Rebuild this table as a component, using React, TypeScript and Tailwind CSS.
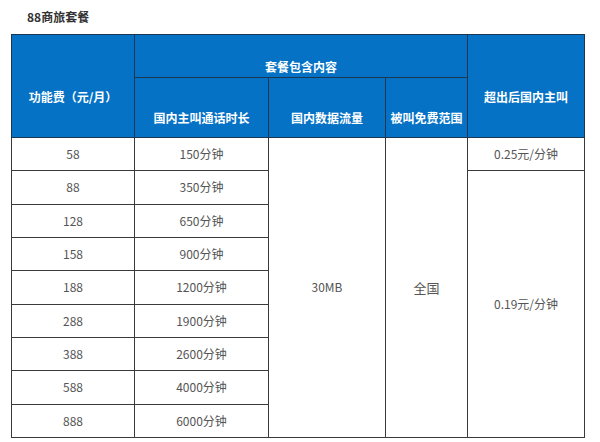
const rows = [
  { fee: '58', mins: '150分钟' },
  { fee: '88', mins: '350分钟' },
  { fee: '128', mins: '650分钟' },
  { fee: '158', mins: '900分钟' },
  { fee: '188', mins: '1200分钟' },
  { fee: '288', mins: '1900分钟' },
  { fee: '388', mins: '2600分钟' },
  { fee: '588', mins: '4000分钟' },
  { fee: '888', mins: '6000分钟' },
];

const th = 'border border-[#1d3650] bg-[#0572c6] text-white font-bold text-[12px] text-center align-top p-0';
const td = 'border border-[#3a3a3a] text-[#555] text-[12px] text-center align-middle p-0';

export default function App() {
  return (
    <div
      className="w-[600px] h-[442px] bg-white overflow-hidden"
      style={{ fontFamily: '"Noto Sans CJK SC", "Liberation Sans", sans-serif' }}
    >
      <div className="h-[34px] pl-[27px] pt-[9px] text-[12px] font-bold text-[#333] leading-[16px]">
        88商旅套餐
      </div>
      <table className="ml-[11px] w-[573px] table-fixed border-collapse">
        <colgroup>
          <col className="w-[123px]" />
          <col className="w-[134px]" />
          <col className="w-[117px]" />
          <col className="w-[82px]" />
          <col className="w-[117px]" />
        </colgroup>
        <thead>
          <tr className="h-[43px]">
            <th rowSpan={2} className={th}>
              <div className="pt-[54px] leading-[16px]">功能费（元/月）</div>
            </th>
            <th colSpan={3} className={th}>
              <div className="pt-[24px] leading-[16px]">套餐包含内容</div>
            </th>
            <th rowSpan={2} className={th}>
              <div className="pt-[54px] leading-[16px]">超出后国内主叫</div>
            </th>
          </tr>
          <tr className="h-[60px]">
            <th className={th}>
              <div className="pt-[32px] leading-[16px]">国内主叫通话时长</div>
            </th>
            <th className={th}>
              <div className="pt-[32px] leading-[16px]">国内数据流量</div>
            </th>
            <th className={th}>
              <div className="pt-[32px] leading-[16px]">被叫免费范围</div>
            </th>
          </tr>
        </thead>
        <tbody>
          {rows.map((r, i) => (
            <tr key={r.fee} className="h-[33.33px]">
              <td className={td}>{r.fee}</td>
              <td className={td}>{r.mins}</td>
              {i === 0 && (
                <>
                  <td rowSpan={9} className={td}>30MB</td>
                  <td rowSpan={9} className={`${td} text-[13px]`}>全国</td>
                  <td className={td}>0.25元/分钟</td>
                </>
              )}
              {i === 1 && (
                <td rowSpan={8} className={td}>0.19元/分钟</td>
              )}
            </tr>
          ))}
        </tbody>
      </table>
    </div>
  );
}
